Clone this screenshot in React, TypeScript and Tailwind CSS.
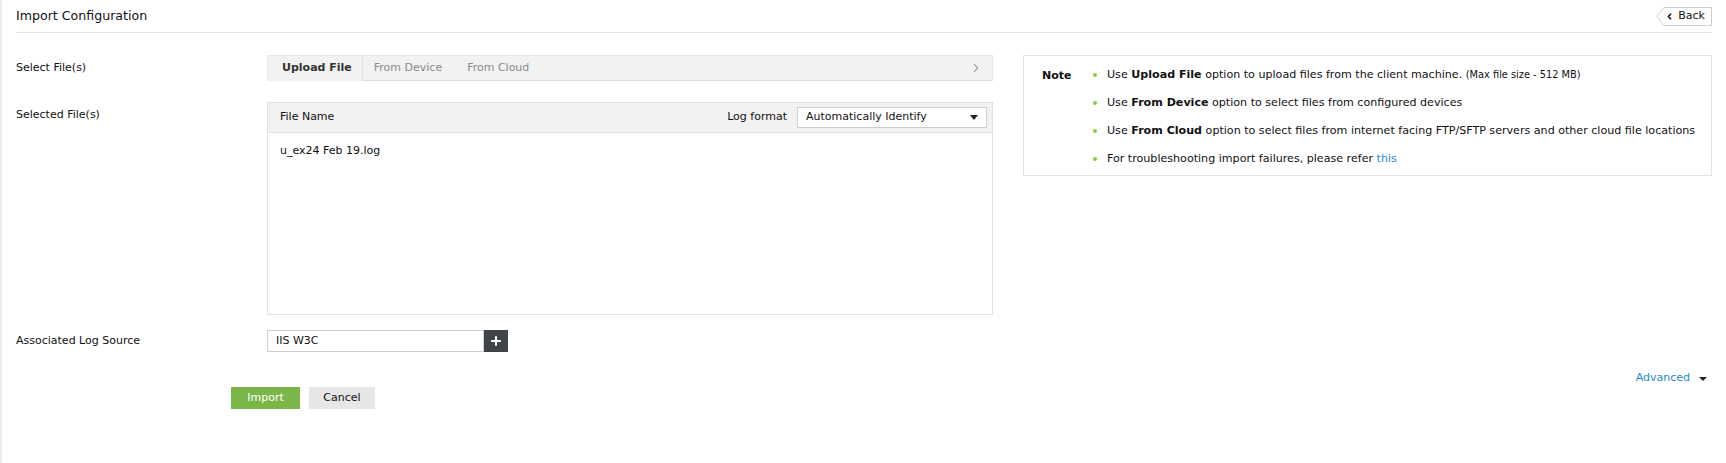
import { ChevronLeft, ChevronRight, Plus } from 'lucide-react';

const font = { fontFamily: '"DejaVu Sans", Verdana, sans-serif' };

export default function App() {
  return (
    <div style={font} className="w-full h-[463px] bg-white border-l-2 border-[#ececec] text-[#111] text-[11px] overflow-hidden">
      {/* header */}
      <div className="ml-[14px] mr-[14px] h-[33px] border-b border-[#e3e3e3] flex items-center justify-between">
        <span className="text-[12.6px] text-[#111]">Import Configuration</span>
        <BackButton />
      </div>

      <div className="flex pl-[14px] pr-[14px] pt-[22px]">
        {/* form column */}
        <div className="w-[977px] shrink-0">
          <div className="flex items-center h-[26px]">
            <div className="w-[251px] shrink-0">Select File(s)</div>
            <Tabs />
          </div>

          <div className="flex mt-[21px]">
            <div className="w-[251px] shrink-0 pt-[5px]">Selected File(s)</div>
            <FileTable />
          </div>

          <div className="flex items-center mt-[15px] h-[22px]">
            <div className="w-[251px] shrink-0">Associated Log Source</div>
            <div className="flex h-[22px]">
              <div className="w-[217px] border border-[#cfcfcf] flex items-center pl-[8px]">IIS W3C</div>
              <button className="w-[24px] bg-[#3e4448] flex items-center justify-center">
                <Plus size={14} strokeWidth={3.5} className="text-white" />
              </button>
            </div>
          </div>
        </div>

        {/* notes */}
        <div className="flex-1 ml-[30px] h-[121px] border border-[#e3e3e3] flex pt-[12px] pl-[18px]">
          <div className="w-[51px] shrink-0 font-bold">Note</div>
          <ul className="flex flex-col gap-[15px] text-[11.1px]">
            <Bullet>
              Use <b>Upload File</b> option to upload files from the client machine.{' '}
              <span className="text-[9.8px]">(Max file size - 512 MB)</span>
            </Bullet>
            <Bullet>
              Use <b>From Device</b> option to select files from configured devices
            </Bullet>
            <Bullet>
              Use <b>From Cloud</b> option to select files from internet facing FTP/SFTP servers and other cloud file locations
            </Bullet>
            <Bullet>
              For troubleshooting import failures, please refer <span className="text-[#1d8ad4]">this</span>
            </Bullet>
          </ul>
        </div>
      </div>

      {/* advanced toggle */}
      <div className="flex justify-end items-center pr-[19px] mt-[19px] h-[15px]">
        <span className="text-[#1d8ad4]">Advanced</span>
        <span className="ml-[9px] w-0 h-0 border-l-[4px] border-r-[4px] border-t-[4px] border-l-transparent border-r-transparent border-t-[#222]" />
      </div>

      <div className="flex gap-[9px] pl-[229px] mt-[1px]">
        <button className="w-[69px] h-[22px] bg-[#7ab648] text-white">Import</button>
        <button className="w-[66px] h-[22px] bg-[#e6e6e6]">Cancel</button>
      </div>
    </div>
  );
}

function BackButton() {
  return (
    <button className="relative w-[56px] h-[19px] flex items-center justify-end pr-[7px] text-[11px]">
      <svg className="absolute inset-0" width="56" height="19" viewBox="0 0 56 19">
        <polygon points="8,0.5 55.5,0.5 55.5,18.5 8,18.5 0.8,9.5" fill="#fff" stroke="#cfcfcf" />
      </svg>
      <span className="relative flex items-center gap-[4px]">
        <ChevronLeft size={9} strokeWidth={4.5} />
        Back
      </span>
    </button>
  );
}

function Tabs() {
  return (
    <div className="w-[726px] h-[26px] flex bg-[#f2f2f2] border-t border-x border-[#e6e6e6]">
      <div className="pl-[14px] pr-[10px] flex items-center font-bold text-[#333] border-r border-[#e0e0e0]">Upload File</div>
      <div className="flex-1 flex items-center border-b border-[#dedede] text-[#8a8a8a]">
        <span className="ml-[11px]">From Device</span>
        <span className="ml-[25px]">From Cloud</span>
        <ChevronRight size={14} strokeWidth={1.5} className="ml-auto mr-[9px] text-[#555]" />
      </div>
    </div>
  );
}

function FileTable() {
  return (
    <div className="w-[726px] h-[213px] border border-[#e0e0e0]">
      <div className="h-[30px] bg-[#f2f2f2] border-b border-[#e0e0e0] flex items-center pl-[12px] pr-[5px]">
        <span>File Name</span>
        <span className="ml-auto mr-[10px]">Log format</span>
        <div className="w-[190px] h-[21px] bg-white border border-[#cfcfcf] flex items-center pl-[8px] pr-[8px]">
          Automatically Identify
          <span className="ml-auto w-0 h-0 border-l-[4px] border-r-[4px] border-t-[5px] border-l-transparent border-r-transparent border-t-[#222]" />
        </div>
      </div>
      <div className="pl-[12px] pt-[10px]">u_ex24 Feb 19.log</div>
    </div>
  );
}

function Bullet({ children }: { children: React.ReactNode }) {
  return (
    <li className="flex items-center leading-[13px]">
      <span className="w-[4px] h-[4px] rounded-full bg-[#8dc63f] mr-[10px] shrink-0" />
      <span>{children}</span>
    </li>
  );
}
